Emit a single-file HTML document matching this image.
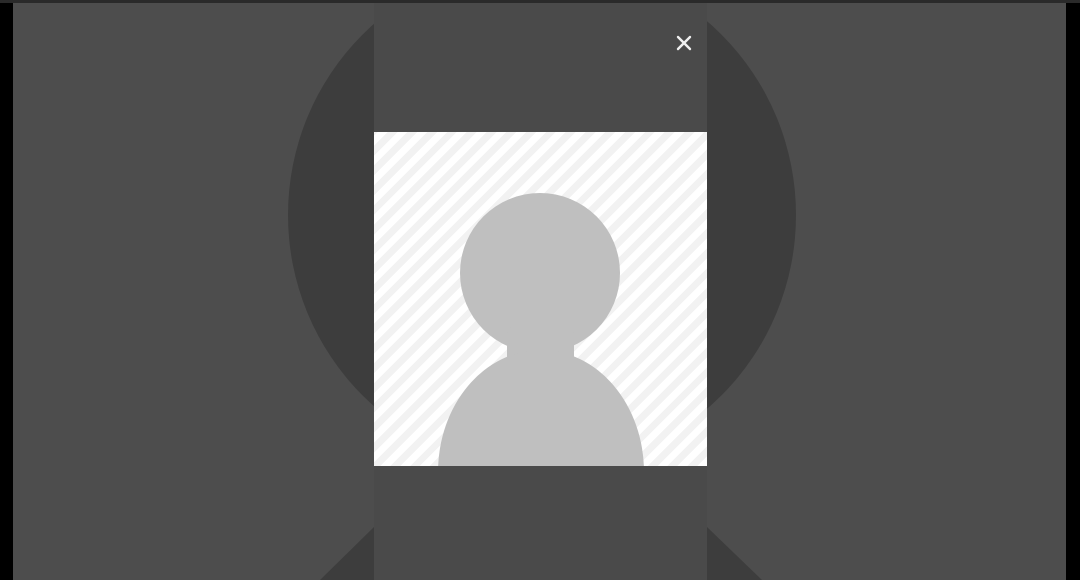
<!DOCTYPE html>
<html><head><meta charset="utf-8"><style>
html,body{margin:0;padding:0;width:1080px;height:580px;overflow:hidden;background:#000;}
#bg{position:absolute;left:13px;top:0;width:1053px;height:580px;background:#4d4d4d;overflow:hidden;}
#top{position:absolute;left:0;top:0;width:1080px;height:3px;background:#2a2a2a;}
#circ{position:absolute;left:288px;top:-40px;width:508px;height:510px;border-radius:50%;background:#3d3d3d;}
#panel{position:absolute;left:374px;top:0;width:333px;height:580px;background:#4a4a4a;}
#img{position:absolute;left:374px;top:132px;width:333px;height:334px;overflow:hidden;
background:repeating-linear-gradient(-45deg,#ffffff 0 7px,#f2f2f2 7px 14px);}
#x{position:absolute;left:675px;top:34px;width:18px;height:18px;}
</style></head><body>
<div id="bg"></div>
<div id="circ"></div>
<svg style="position:absolute;left:0;top:0" width="1080" height="580">
<polygon points="374,527 320,580 374,580" fill="#3d3d3d"/>
<polygon points="707,527 762,580 707,580" fill="#3d3d3d"/>
</svg>
<div id="panel"></div>
<div id="top"></div>
<div id="img">
<svg width="333" height="334" style="position:absolute;left:0;top:0">
<circle cx="166" cy="141" r="80" fill="#bfbfbf"/>
<rect x="133" y="195" width="67" height="50" rx="6" fill="#bfbfbf"/>
<ellipse cx="167" cy="340" rx="103" ry="122" fill="#bfbfbf"/>
</svg>
</div>
<svg id="x" viewBox="0 0 18 18"><path d="M3 3L15 15M15 3L3 15" stroke="#f0f0f0" stroke-width="2.4" stroke-linecap="round"/></svg>
</body></html>
